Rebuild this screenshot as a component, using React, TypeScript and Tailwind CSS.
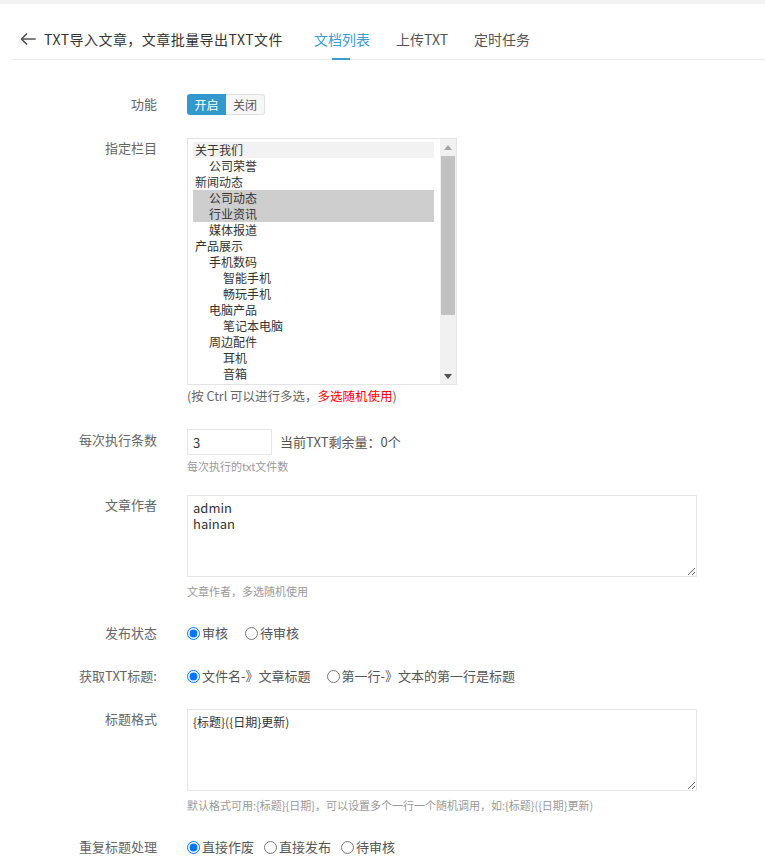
import React from "react";

const opts: [string, number][] = [
  ["关于我们", 0],
  ["公司荣誉", 1],
  ["新闻动态", 0],
  ["公司动态", 1],
  ["行业资讯", 1],
  ["媒体报道", 1],
  ["产品展示", 0],
  ["手机数码", 1],
  ["智能手机", 2],
  ["畅玩手机", 2],
  ["电脑产品", 1],
  ["笔记本电脑", 2],
  ["周边配件", 1],
  ["耳机", 2],
  ["音箱", 2],
  ["鼠标", 2],
];

const indent = ["pl-[2px]", "pl-[16px]", "pl-[30px]"];

function Label({ children, extra = "" }: { children: React.ReactNode; extra?: string }) {
  return (
    <div className={`w-[157px] shrink-0 text-right text-[13px] leading-[20px] text-[#666] ${extra}`}>{children}</div>
  );
}

function Radio({ checked, name, label }: { checked?: boolean; name: string; label: string }) {
  return (
    <label className="flex items-center">
      <input
        type="radio"
        name={name}
        defaultChecked={checked}
        className="m-0 h-[13px] w-[13px] accent-[#0075ff]"
      />
      <span className="ml-[2px] text-[13px] leading-[20px] text-[#555]">{label}</span>
    </label>
  );
}

export default function App() {
  return (
    <div className="min-h-[863px] bg-white font-['Noto_Sans_CJK_SC',sans-serif] text-[#333]">
      <div className="h-[4px] bg-[#f2f2f2]" />
      {/* header */}
      <div className="ml-[13px] flex h-[56px] items-stretch border-b border-[#e8e8e8]">
        <div className="flex items-center pl-[7px] pt-[14px]">
          <svg width="16" height="12" viewBox="0 0 16 12" fill="none" stroke="#555" strokeWidth="1.7" strokeLinecap="round" strokeLinejoin="round">
            <path d="M15 6H1.5M6.5 1L1.5 6L6.5 11" />
          </svg>
          <span className="ml-[8px] text-[14px] leading-[20px] text-[#333] tracking-[0.45px]">TXT导入文章，文章批量导出TXT文件</span>
        </div>
        <div className="ml-[31px] relative flex items-center pt-[14px] text-[14px] leading-[20px] text-[#3a9bd5]">
          文档列表
          <div className="absolute bottom-[-1px] left-[18px] h-[2px] w-[18px] bg-[#3a9bd5]" />
        </div>
        <div className="ml-[26px] flex items-center pt-[14px] text-[14px] leading-[20px] text-[#555]">上传TXT</div>
        <div className="ml-[26px] flex items-center pt-[14px] text-[14px] leading-[20px] text-[#555]">定时任务</div>
      </div>

      <div className="flex flex-col pt-[34px]">
        {/* 功能 */}
        <div className="flex h-[44px] items-start">
          <Label>功能</Label>
          <div className="ml-[30px] flex h-[21px] text-[12px]">
            <div className="flex w-[39px] items-center justify-center rounded-l-[3px] bg-[#3399cc] text-white">开启</div>
            <div className="flex w-[39px] items-center justify-center rounded-r-[3px] border border-l-0 border-[#dedede] bg-[#f7f7f7] text-[#555]">关闭</div>
          </div>
        </div>

        {/* 指定栏目 */}
        <div className="flex h-[291px] items-start">
          <Label>指定栏目</Label>
          <div className="ml-[30px] flex flex-col">
            <div className="flex h-[247px] w-[270px] overflow-hidden border border-[#e4e4e4] bg-white">
              <div className="h-full flex-1 overflow-hidden pl-[5px] pr-[6px] pt-[3px]">
                {opts.map(([t, l], i) => (
                  <div
                    key={i}
                    className={`h-[16px] whitespace-nowrap text-[12px] leading-[16px] text-[#333] ${indent[l]} ${
                      i === 0 ? "bg-[#f2f2f2]" : i === 3 || i === 4 ? "bg-[#cecece]" : ""
                    }`}
                  >
                    {t}
                  </div>
                ))}
              </div>
              <div className="flex w-[16px] flex-col items-center bg-[#f1f1f1]">
                <div className="flex h-[16px] w-full items-center justify-center">
                  <svg width="8" height="5" viewBox="0 0 8 5"><path d="M0 5L4 0L8 5Z" fill="#a3a3a3" /></svg>
                </div>
                <div className="mt-[1px] h-[159px] w-[14px] bg-[#c1c1c1]" />
                <div className="flex-1" />
                <div className="flex h-[16px] w-full items-center justify-center">
                  <svg width="8" height="5" viewBox="0 0 8 5"><path d="M0 0L8 0L4 5Z" fill="#505050" /></svg>
                </div>
              </div>
            </div>
            <div className="mt-[3px] text-[12.5px] leading-[16px] text-[#666]">
              (按 Ctrl 可以进行多选，<span className="text-[#ff0000]">多选随机使用</span>)
            </div>
          </div>
        </div>

        {/* 每次执行条数 */}
        <div className="flex h-[66px] items-start">
          <Label extra="pt-[1px]">每次执行条数</Label>
          <div className="ml-[30px] flex flex-col">
            <div className="flex items-center">
              <input
                defaultValue="3"
                className="h-[26px] w-[85px] border border-[#e6e6e6] px-[5px] text-[13px] text-[#333] outline-none"
              />
              <span className="ml-[8px] text-[13px] text-[#555]">当前TXT剩余量：0个</span>
            </div>
            <div className="mt-[4px] text-[11px] leading-[14px] text-[#999]">每次执行的txt文件数</div>
          </div>
        </div>

        {/* 文章作者 */}
        <div className="flex h-[128px] items-start">
          <Label>文章作者</Label>
          <div className="ml-[30px] flex flex-col">
            <textarea
              defaultValue={"admin\nhainan"}
              className="block h-[82px] w-[510px] border border-[#e6e6e6] px-[5px] pt-[4px] text-[13px] leading-[16px] text-[#333] outline-none"
            />
            <div className="mt-[7px] text-[11px] leading-[14px] text-[#999]">文章作者，多选随机使用</div>
          </div>
        </div>

        {/* 发布状态 */}
        <div className="flex h-[43px] items-start">
          <Label>发布状态</Label>
          <div className="ml-[30px] flex h-[20px] items-center gap-[17px]">
            <Radio name="status" checked label="审核" />
            <Radio name="status" label="待审核" />
          </div>
        </div>

        {/* 获取TXT标题 */}
        <div className="flex h-[43px] items-start">
          <Label>获取TXT标题:</Label>
          <div className="ml-[30px] flex h-[20px] items-center gap-[16px]">
            <Radio name="title" checked label="文件名-》文章标题" />
            <Radio name="title" label="第一行-》文本的第一行是标题" />
          </div>
        </div>

        {/* 标题格式 */}
        <div className="flex h-[128px] items-start">
          <Label>标题格式</Label>
          <div className="ml-[30px] flex flex-col">
            <textarea
              defaultValue={"{标题}({日期}更新)"}
              className="block h-[82px] w-[510px] border border-[#e6e6e6] px-[5px] pt-[4px] text-[12px] leading-[16px] text-[#333] outline-none"
            />
            <div className="mt-[7px] text-[11px] leading-[14px] text-[#999]">
              默认格式可用:{"{标题}{日期}"}，可以设置多个一行一个随机调用，如:{"{标题}({日期}更新)"}
            </div>
          </div>
        </div>

        {/* 重复标题处理 */}
        <div className="flex h-[30px] items-start">
          <Label>重复标题处理</Label>
          <div className="ml-[30px] flex h-[20px] items-center gap-[10px]">
            <Radio name="dup" checked label="直接作废" />
            <Radio name="dup" label="直接发布" />
            <Radio name="dup" label="待审核" />
          </div>
        </div>
      </div>
    </div>
  );
}
